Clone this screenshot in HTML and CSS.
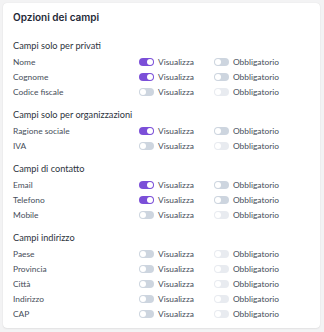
FILE: index.html
```html
<!DOCTYPE html>
<html>
<head>
<meta charset="utf-8">
<link rel="stylesheet" href="styles.css">
</head>
<body>
<div class="card">
  <div class="title">Opzioni dei campi</div>

  <div class="section">
    <div class="sec-head">Campi solo per privati</div>
    <div class="row"><span class="label">Nome</span><span class="opt"><span class="tg on"></span>Visualizza</span><span class="opt"><span class="tg off"></span>Obbligatorio</span></div>
    <div class="row"><span class="label">Cognome</span><span class="opt"><span class="tg on"></span>Visualizza</span><span class="opt"><span class="tg off"></span>Obbligatorio</span></div>
    <div class="row"><span class="label">Codice fiscale</span><span class="opt"><span class="tg off"></span>Visualizza</span><span class="opt"><span class="tg dis"></span>Obbligatorio</span></div>
  </div>

  <div class="section">
    <div class="sec-head">Campi solo per organizzazioni</div>
    <div class="row"><span class="label">Ragione sociale</span><span class="opt"><span class="tg on"></span>Visualizza</span><span class="opt"><span class="tg off"></span>Obbligatorio</span></div>
    <div class="row"><span class="label">IVA</span><span class="opt"><span class="tg off"></span>Visualizza</span><span class="opt"><span class="tg dis"></span>Obbligatorio</span></div>
  </div>

  <div class="section">
    <div class="sec-head">Campi di contatto</div>
    <div class="row"><span class="label">Email</span><span class="opt"><span class="tg on"></span>Visualizza</span><span class="opt"><span class="tg off"></span>Obbligatorio</span></div>
    <div class="row"><span class="label">Telefono</span><span class="opt"><span class="tg on"></span>Visualizza</span><span class="opt"><span class="tg off"></span>Obbligatorio</span></div>
    <div class="row"><span class="label">Mobile</span><span class="opt"><span class="tg off"></span>Visualizza</span><span class="opt"><span class="tg dis"></span>Obbligatorio</span></div>
  </div>

  <div class="section">
    <div class="sec-head">Campi indirizzo</div>
    <div class="row"><span class="label">Paese</span><span class="opt"><span class="tg off"></span>Visualizza</span><span class="opt"><span class="tg dis"></span>Obbligatorio</span></div>
    <div class="row"><span class="label">Provincia</span><span class="opt"><span class="tg off"></span>Visualizza</span><span class="opt"><span class="tg dis"></span>Obbligatorio</span></div>
    <div class="row"><span class="label">Città</span><span class="opt"><span class="tg off"></span>Visualizza</span><span class="opt"><span class="tg dis"></span>Obbligatorio</span></div>
    <div class="row"><span class="label">Indirizzo</span><span class="opt"><span class="tg off"></span>Visualizza</span><span class="opt"><span class="tg dis"></span>Obbligatorio</span></div>
    <div class="row"><span class="label">CAP</span><span class="opt"><span class="tg off"></span>Visualizza</span><span class="opt"><span class="tg dis"></span>Obbligatorio</span></div>
  </div>
</div>
</body>
</html>
```

FILE: styles.css
```css
* { box-sizing: border-box; }
html, body { margin: 0; padding: 0; }
body {
  background: #f3f3f4;
  font-family: Lato, "Noto Sans", sans-serif;
  padding: 3px 4px 4px 3px;
  width: 324px;
  height: 332px;
}
.card {
  background: #ffffff;
  border-radius: 4px;
  box-shadow: 0 0 1px rgba(0,0,0,0.12), 0 1px 2px rgba(0,0,0,0.06);
  padding: 8px 10px 8px 10px;
  height: 325px;
}
.title {
  font-family: Inter, sans-serif;
  font-size: 10px;
  font-weight: 600;
  color: #1f2937;
  line-height: 12px;
}
.section { margin-top: 17px; }
.section + .section { margin-top: 10px; }
.sec-head {
  font-size: 9.2px;
  color: #2d3440;
  line-height: 12px;
  margin-bottom: 2px;
}
.row {
  display: flex;
  align-items: center;
  height: 15px;
  font-size: 8.4px;
  color: #464e5a;
}
.label { width: 126px; }
.opt {
  display: flex;
  align-items: center;
  gap: 4px;
  width: 75px;
}
.tg {
  position: relative;
  width: 15px;
  height: 8px;
  border-radius: 4px;
  flex: none;
}
.tg::after {
  content: "";
  position: absolute;
  top: 1px;
  width: 6px;
  height: 6px;
  border-radius: 50%;
  background: #fff;
}
.tg.on { background: #7b4fd8; }
.tg.on::after { right: 1px; }
.tg.off { background: #cdd5df; }
.tg.off::after { left: 1px; }
.tg.dis { background: #e8ebf0; }
.tg.dis::after { left: 1px; }
```
